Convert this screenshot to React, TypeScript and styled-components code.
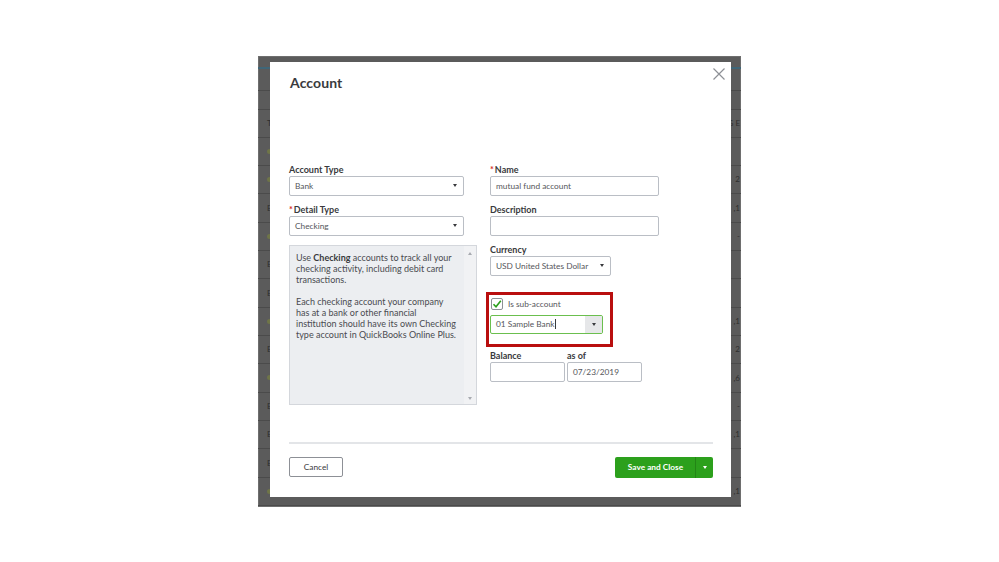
import styled, { createGlobalStyle } from 'styled-components';

const GlobalStyle = createGlobalStyle`
  body {
    margin: 0;
    background: #ffffff;
    font-family: Lato, "Open Sans", Arial, sans-serif;
    color: #393a3d;
  }
`;

const Page = styled.div`
  width: 999px;
  height: 562px;
  display: flex;
  align-items: center;
  justify-content: center;
`;

const Screen = styled.div`
  position: relative;
  width: 483px;
  height: 451px;
  background: #5b5b5b;
  overflow: hidden;
  box-shadow: inset 0 0 0 1px #6e6e6e;
`;

// dimmed page behind the dialog
const BgTable = styled.div`
  display: flex;
  flex-direction: column;
`;

const BgTopBar = styled.div`
  height: 11px;
  border-bottom: 2px solid #3f6678;
`;

const BgRow = styled.div<{ h: number }>`
  height: ${p => p.h}px;
  box-sizing: border-box;
  border-bottom: 1px solid #4b4b4b;
  display: flex;
  align-items: center;
  justify-content: space-between;
  padding: 0 1px 0 9px;
  font-size: 8px;
  color: #2e2e2e;
`;

const BgDot = styled.span`
  display: block;
  width: 5px;
  height: 5px;
  border-radius: 50%;
  background: #6f7548;
`;

const Modal = styled.div`
  position: absolute;
  left: 12px;
  top: 6px;
  width: 461px;
  height: 435px;
  background: #ffffff;
  display: flex;
  flex-direction: column;
  box-sizing: border-box;
  padding: 0 18px 19px 19px;
`;

const Header = styled.div`
  display: flex;
  justify-content: space-between;
  align-items: flex-start;
  padding-top: 12px;
  height: 102px;
  box-sizing: border-box;
`;

const Title = styled.h1`
  margin: 0;
  font-size: 14px;
  font-weight: 700;
  color: #393a3d;
  line-height: 18px;
  padding-left: 1px;
  letter-spacing: 0.1px;
`;

const CloseButton = styled.button`
  border: none;
  background: none;
  padding: 0;
  margin: -7px -13px 0 0;
  width: 14px;
  height: 14px;
  cursor: pointer;
  display: flex;
`;

const Body = styled.div`
  flex: 1;
  display: grid;
  grid-template-columns: 188px 169px;
  column-gap: 13px;
  align-items: start;
`;

const Column = styled.div`
  display: flex;
  flex-direction: column;
`;

const Label = styled.label<{ gap?: number }>`
  display: block;
  font-size: 9px;
  font-weight: 700;
  line-height: 12px;
  color: #393a3d;
  margin-top: ${p => p.gap ?? 8}px;
`;

const Req = styled.span`
  color: #d52b1e;
  margin-right: 1px;
`;

const Control = styled.div<{ w: number; h?: number; focus?: boolean }>`
  width: ${p => p.w}px;
  height: ${p => p.h ?? 20}px;
  box-sizing: border-box;
  border: 1px solid ${p => (p.focus ? '#6bbf4e' : '#babec5')};
  border-radius: 2px;
  background: #ffffff;
  display: flex;
  align-items: center;
  font-size: 8.3px;
  color: #55565b;
  padding-left: 5px;
  overflow: hidden;
`;

const ControlText = styled.span`
  flex: 1;
  white-space: nowrap;
`;

const Arrow = styled.span<{ light?: boolean }>`
  width: 0;
  height: 0;
  border-left: 2.5px solid transparent;
  border-right: 2.5px solid transparent;
  border-top: 3.5px solid ${p => (p.light ? '#ffffff' : '#393a3d')};
`;

const ArrowBox = styled.span<{ shaded?: boolean }>`
  width: 17px;
  align-self: stretch;
  display: flex;
  align-items: center;
  justify-content: center;
  background: ${p => (p.shaded ? '#e6e7e9' : 'transparent')};
`;

const Caret = styled.span`
  display: inline-block;
  width: 1px;
  height: 10px;
  background: #393a3d;
  vertical-align: middle;
  margin-left: 0.5px;
`;

const HelpBox = styled.div`
  margin-top: 9px;
  width: 188px;
  height: 160px;
  box-sizing: border-box;
  border: 1px solid #d4d7dc;
  background: #eceef1;
  display: flex;
`;

const HelpText = styled.div`
  flex: 1;
  padding: 6px 0 0 6px;
  font-size: 9px;
  line-height: 11px;
  color: #4a4b50;
  white-space: nowrap;

  p {
    margin: 0 0 11px 0;
  }
  b {
    color: #393a3d;
  }
`;

const ScrollBar = styled.div`
  width: 12px;
  display: flex;
  flex-direction: column;
  justify-content: space-between;
  align-items: center;
  padding: 6px 0 4px;
  background: #f1f2f4;
`;

const ScrollArrow = styled.span<{ up?: boolean }>`
  width: 0;
  height: 0;
  border-left: 2.5px solid transparent;
  border-right: 2.5px solid transparent;
  ${p => (p.up ? 'border-bottom: 3px solid #a8abb0;' : 'border-top: 3px solid #a8abb0;')}
`;

const Highlight = styled.div`
  margin: 16px 0 0 -4px;
  width: 127px;
  box-sizing: border-box;
  border: 3px solid #b90e0e;
  padding: 3px 7px 10px 1px;
  display: flex;
  flex-direction: column;
  gap: 5px;
`;

const CheckRow = styled.div`
  display: flex;
  align-items: center;
  gap: 5px;
  font-size: 8.3px;
  color: #55565b;
  padding-left: 1px;
`;

const CheckBox = styled.span`
  width: 12px;
  height: 12px;
  box-sizing: border-box;
  border: 1px solid #8d9096;
  border-radius: 2px;
  display: flex;
  align-items: center;
  justify-content: center;
`;

const Pair = styled.div`
  display: flex;
  gap: 2px;
  margin-top: 3px;
`;

const PairCol = styled.div`
  display: flex;
  flex-direction: column;
`;

const Footer = styled.div`
  border-top: 2px solid #e3e5e8;
  padding-top: 13px;
  display: flex;
  justify-content: space-between;
  align-items: center;
`;

const CancelButton = styled.button`
  width: 54px;
  height: 20px;
  border: 1px solid #8d9096;
  border-radius: 2px;
  background: #ffffff;
  font-family: inherit;
  font-size: 8.3px;
  color: #393a3d;
  padding: 0;
`;

const SaveButton = styled.div`
  width: 98px;
  height: 21px;
  border-radius: 2px;
  background: #2ca01c;
  display: flex;
  color: #ffffff;
  font-size: 8.3px;
  font-weight: 700;
`;

const SaveLabel = styled.span`
  flex: 1;
  display: flex;
  align-items: center;
  justify-content: center;
  border-right: 1px solid #238516;
  padding-left: 1px;
`;

const SaveArrow = styled.span`
  width: 17px;
  display: flex;
  align-items: center;
  justify-content: center;
`;

const bgRows: { h: number; left: 'dot' | string; right: string }[] = [
  { h: 22, left: '', right: '' },
  { h: 19, left: '', right: '' },
  { h: 28, left: 'T', right: 'G E' },
  { h: 28, left: 'dot', right: '' },
  { h: 28, left: 'dot', right: '2' },
  { h: 29, left: 'E', right: ',1' },
  { h: 28, left: 'dot', right: '-' },
  { h: 28, left: 'E', right: '' },
  { h: 29, left: 'E', right: '' },
  { h: 28, left: 'dot', right: ',1' },
  { h: 28, left: 'E', right: '2' },
  { h: 29, left: 'dot', right: ',6' },
  { h: 28, left: 'E', right: '-' },
  { h: 28, left: 'E', right: ',1' },
  { h: 29, left: 'E', right: '' },
  { h: 28, left: 'dot', right: ',1' },
];

function SelectBox({ w, value, h }: { w: number; value: string; h?: number }) {
  return (
    <Control w={w} h={h}>
      <ControlText>{value}</ControlText>
      <ArrowBox>
        <Arrow />
      </ArrowBox>
    </Control>
  );
}

export default function App() {
  return (
    <>
      <GlobalStyle />
      <Page>
        <Screen>
          <BgTable>
            <BgTopBar />
            {bgRows.map((r, i) => (
              <BgRow key={i} h={r.h}>
                <span>{r.left === 'dot' ? <BgDot /> : r.left}</span>
                <span>{r.right}</span>
              </BgRow>
            ))}
          </BgTable>

          <Modal>
            <Header>
              <Title>Account</Title>
              <CloseButton aria-label="Close">
                <svg width="14" height="14" viewBox="0 0 14 14">
                  <path d="M1.5 1.5 L12.5 12.5 M12.5 1.5 L1.5 12.5" stroke="#8d9096" strokeWidth="1.2" />
                </svg>
              </CloseButton>
            </Header>

            <Body>
              <Column>
                <Label gap={0}>Account Type</Label>
                <SelectBox w={175} value="Bank" />
                <Label>
                  <Req>*</Req>Detail Type
                </Label>
                <SelectBox w={175} value="Checking" />
                <HelpBox>
                  <HelpText>
                    <p>
                      Use <b>Checking</b> accounts to track all your
                      <br />
                      checking activity, including debit card
                      <br />
                      transactions.
                    </p>
                    <p>
                      Each checking account your company
                      <br />
                      has at a bank or other financial
                      <br />
                      institution should have its own Checking
                      <br />
                      type account in QuickBooks Online Plus.
                    </p>
                  </HelpText>
                  <ScrollBar>
                    <ScrollArrow up />
                    <ScrollArrow />
                  </ScrollBar>
                </HelpBox>
              </Column>

              <Column>
                <Label gap={0}>
                  <Req>*</Req>Name
                </Label>
                <Control w={169}>
                  <ControlText>mutual fund account</ControlText>
                </Control>
                <Label>Description</Label>
                <Control w={169} />
                <Label>Currency</Label>
                <SelectBox w={121} value="USD United States Dollar" />

                <Highlight>
                  <CheckRow>
                    <CheckBox>
                      <svg width="10" height="10" viewBox="0 0 10 10">
                        <path d="M1.5 5.2 L4 7.8 L8.8 1.8" fill="none" stroke="#2ca01c" strokeWidth="1.6" />
                      </svg>
                    </CheckBox>
                    Is sub-account
                  </CheckRow>
                  <Control w={113} h={19} focus>
                    <ControlText>
                      01 Sample Bank
                      <Caret />
                    </ControlText>
                    <ArrowBox shaded>
                      <Arrow />
                    </ArrowBox>
                  </Control>
                </Highlight>

                <Pair>
                  <PairCol>
                    <Label gap={0}>Balance</Label>
                    <Control w={75} />
                  </PairCol>
                  <PairCol>
                    <Label gap={0}>as of</Label>
                    <Control w={75}>
                      <ControlText>07/23/2019</ControlText>
                    </Control>
                  </PairCol>
                </Pair>
              </Column>
            </Body>

            <Footer>
              <CancelButton>Cancel</CancelButton>
              <SaveButton>
                <SaveLabel>Save and Close</SaveLabel>
                <SaveArrow>
                  <Arrow light />
                </SaveArrow>
              </SaveButton>
            </Footer>
          </Modal>
        </Screen>
      </Page>
    </>
  );
}
